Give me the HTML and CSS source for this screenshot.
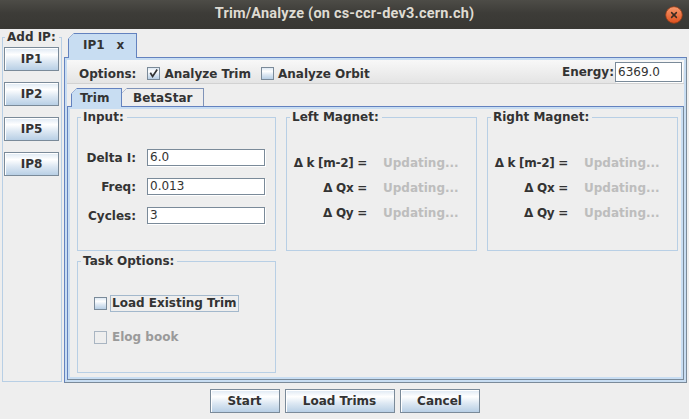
FILE: index.html
```html
<!DOCTYPE html>
<html>
<head>
<meta charset="utf-8">
<title>Trim/Analyze</title>
<link rel="stylesheet" href="styles.css">
</head>
<body>
<div class="titlebar">
  <span></span>
  <span class="title">Trim/Analyze (on cs-ccr-dev3.cern.ch)</span>
  <svg class="close" width="18" height="18" viewBox="0 0 18 18">
    <defs>
      <linearGradient id="cg" x1="0" y1="0" x2="0" y2="1">
        <stop offset="0" stop-color="#f79a6e"/>
        <stop offset="1" stop-color="#de4f1c"/>
      </linearGradient>
    </defs>
    <circle cx="9" cy="9" r="8.3" fill="url(#cg)" stroke="#9a3d16" stroke-width="0.8"/>
    <path d="M6.6 6.6 L11.4 11.4 M11.4 6.6 L6.6 11.4" stroke="#3b2b22" stroke-width="1.5" stroke-linecap="round"/>
  </svg>
</div>

<div class="main">
  <fieldset class="group addip">
    <legend>Add IP:</legend>
    <button class="btn ipbtn">IP1</button>
    <button class="btn ipbtn">IP2</button>
    <button class="btn ipbtn">IP5</button>
    <button class="btn ipbtn">IP8</button>
  </fieldset>

  <div class="tabpane outer">
    <div class="tabs">
      <div class="tab sel iptab"><span>IP1</span><span class="tabx">x</span></div>
    </div>
    <div class="pbody">
      <div class="pcontent">
        <div class="options">
          <div class="optgroup">
            <span>Options:</span>
            <span class="cb first"><svg width="11" height="11" viewBox="0 0 11 11"><path d="M2.3 4.8 L4.6 8.4 L9.2 1.6" fill="none" stroke="#333" stroke-width="1.7"/></svg></span>
            <span class="cblabel">Analyze Trim</span>
            <span class="cb second"></span>
            <span class="cblabel">Analyze Orbit</span>
          </div>
          <span class="energy">Energy:</span>
          <span class="tf energyfield">6369.0</span>
        </div>

        <div class="tabpane inner">
          <div class="tabs">
            <div class="tab sel trimtab">Trim</div>
            <div class="tab betatab">BetaStar</div>
          </div>
          <div class="pbody">
            <div class="pcontent trim">
              <fieldset class="group input">
                <legend>Input:</legend>
                <span class="lbl">Delta I:</span><span class="tf">6.0</span>
                <span class="lbl">Freq:</span><span class="tf">0.013</span>
                <span class="lbl">Cycles:</span><span class="tf">3</span>
              </fieldset>
              <fieldset class="group mag">
                <legend>Left Magnet:</legend>
                <span class="lbl">Δ k [m-2] =</span><span class="upd">Updating...</span>
                <span class="lbl">Δ Qx =</span><span class="upd">Updating...</span>
                <span class="lbl">Δ Qy =</span><span class="upd">Updating...</span>
              </fieldset>
              <fieldset class="group mag">
                <legend>Right Magnet:</legend>
                <span class="lbl">Δ k [m-2] =</span><span class="upd">Updating...</span>
                <span class="lbl">Δ Qx =</span><span class="upd">Updating...</span>
                <span class="lbl">Δ Qy =</span><span class="upd">Updating...</span>
              </fieldset>
              <fieldset class="group task">
                <legend>Task Options:</legend>
                <div class="cbrow"><span class="cb"></span><span class="cbtext focus">Load Existing Trim</span></div>
                <div class="cbrow"><span class="cb dis"></span><span class="cbtext distext">Elog book</span></div>
              </fieldset>
            </div>
          </div>
        </div>
      </div>
    </div>
  </div>
</div>

<div class="actions">
  <button class="btn start">Start</button>
  <button class="btn load">Load Trims</button>
  <button class="btn cancel">Cancel</button>
</div>
</body>
</html>
```

FILE: styles.css
```css
* { box-sizing: border-box; }
html, body { margin: 0; padding: 0; }
body {
  width: 689px;
  height: 419px;
  overflow: hidden;
  background: #eeeeee;
  font: bold 12px/14px "DejaVu Sans", sans-serif;
  color: #333333;
}

/* title bar */
.titlebar {
  height: 29px;
  display: grid;
  grid-template-columns: 1fr auto 1fr;
  align-items: center;
  background: linear-gradient(#4d4c47, #3d3c38 45%, #383733);
}
.title {
  font: 700 14.5px/1 Roboto, "DejaVu Sans", sans-serif;
  color: #dfdbd2;
  letter-spacing: 0.2px;
}
.close { justify-self: end; margin-right: 6px; display: block; }

/* main area */
.main { display: flex; height: 357px; }

.group {
  margin: 0;
  padding: 0;
  min-width: 0;
  border: 1px solid #b8cfe5;
}
.group legend {
  margin-left: 3px;
  padding: 0 3px 0 2px;
  line-height: 14px;
}

.addip {
  margin: 1px 0 0 2px;
  width: 60px;
  height: 352px;
  padding: 3px 0 0 1px;
  display: flex;
  flex-direction: column;
  gap: 11px;
}
.addip legend { margin-left: 1px; }

.btn {
  font: bold 12px/14px "DejaVu Sans", sans-serif;
  color: #333333;
  height: 24px;
  padding: 0;
  border: 1px solid #7a8a99;
  background: linear-gradient(#dde8f3 0%, #ffffff 30%, #dde8f3 60%, #b8cfe5 100%);
  box-shadow: inset 1px 1px 0 #ffffff;
}
.ipbtn { width: 55px; flex: none; }

/* tabbed panes */
.tabpane { display: flex; flex-direction: column; }
.outer {
  margin: 4px 0 0 2px;
  width: 623px;
  height: 350px;
}
.tabs { display: flex; align-items: flex-start; padding-left: 4px; flex: none; }
.outer > .tabs { height: 24px; }
.inner > .tabs { height: 18px; }

.tab {
  position: relative;
  z-index: 1;
  display: flex;
  align-items: center;
  border: 1px solid #6382bf;
  border-bottom: none;
  background-color: #eeeeee;
  background-image: linear-gradient(135deg, transparent 3.6px, #6382bf 3.6px, #6382bf 4.9px, transparent 4.9px);
  background-size: 8px 8px;
  background-repeat: no-repeat;
  background-origin: border-box;
  clip-path: polygon(6px 0, 100% 0, 100% 100%, 0 100%, 0 6px);
}
.tab.sel { background-color: #c8ddf2; z-index: 2; }

.iptab { width: 69px; height: 25px; padding: 0 0 2px 14px; }
.tabx { margin-left: 12px; }
.trimtab { width: 51px; height: 19px; padding: 0 0 1px 8px; }
.betatab {
  width: 83px;
  height: 18px;
  margin-left: -1px;
  padding: 0 0 0 11px;
  border-color: #7f93b8;
  background-image: linear-gradient(135deg, transparent 3.6px, #7f93b8 3.6px, #7f93b8 4.9px, transparent 4.9px);
}

.pbody {
  flex: 1;
  min-height: 0;
  display: flex;
  flex-direction: column;
  border: 1px solid #6382bf;
  border-right-color: #7a8a99;
  border-bottom-color: #7a8a99;
  padding: 2px;
  background: #c8ddf2;
}
.pcontent {
  flex: 1;
  min-height: 0;
  background: #eeeeee;
  display: flex;
  flex-direction: column;
}

/* options row */
.options {
  flex: none;
  height: 24px;
  display: flex;
  align-items: center;
  padding-left: 12px;
  border-bottom: 1px solid #d2d2d2;
  background: linear-gradient(#f8f8f8, #e4e4e4);
}
.optgroup { display: flex; align-items: center; margin-top: 4px; }
.cb {
  width: 13px;
  height: 13px;
  flex: none;
  display: inline-flex;
  align-items: center;
  justify-content: center;
  border: 1px solid #7a8a99;
  background: linear-gradient(#dde8f3 0%, #ffffff 30%, #dde8f3 60%, #b8cfe5 100%);
}
.cb svg { display: block; }
.cb.first { margin-left: 11px; }
.cb.second { margin-left: 10px; }
.cb.dis { border-color: #a9b5c2; background: none; }
.cblabel { margin-left: 4px; }
.energy { margin-left: auto; }
.tf {
  display: block;
  height: 17px;
  padding: 0 0 0 2px;
  border: 1px solid #7a8a99;
  background: #ffffff;
  box-shadow: 1px 1px 0 #ffffff;
  font: 12px/15px "DejaVu Sans", sans-serif;
  color: #333333;
}
.energyfield { width: 67px; height: 20px; line-height: 18px; margin: 0 2px 0 1px; }

/* inner pane */
.inner { flex: 1; min-height: 0; margin-top: 4px; }
.trim {
  display: grid;
  grid-template-columns: 199px 191px 191px;
  grid-template-rows: 141px 119px;
  gap: 3px 10px;
  padding: 1px 0 0 7px;
  align-content: start;
}

.input {
  padding-top: 25px;
  display: grid;
  grid-template-columns: 58px 118px;
  column-gap: 11px;
  row-gap: 12px;
  align-content: start;
  align-items: center;
}
.lbl { justify-self: end; white-space: nowrap; }

.mag {
  padding-top: 26px;
  display: grid;
  grid-template-columns: 80px auto;
  column-gap: 16px;
  grid-auto-rows: 25px;
  align-content: start;
  align-items: center;
}
.mag .lbl { letter-spacing: -0.3px; }
.upd { color: #bdbdbd; white-space: nowrap; }

.task {
  padding: 27px 0 0 0;
  display: flex;
  flex-direction: column;
  align-items: flex-start;
  gap: 17px;
}
.cbrow { display: flex; align-items: center; height: 17px; margin-left: 16px; }
.cbtext {
  margin-left: 3px;
  padding: 0 1px;
  border: 1px solid transparent;
  line-height: 15px;
}
.cbtext.focus { border-color: #a3b8cc; }
.distext { color: #9a9a9a; }

/* bottom buttons */
.actions {
  display: flex;
  justify-content: center;
  gap: 5px;
  padding: 3px 0 0 0;
}
.start { width: 70px; }
.load { width: 110px; }
.cancel { width: 80px; }
```
